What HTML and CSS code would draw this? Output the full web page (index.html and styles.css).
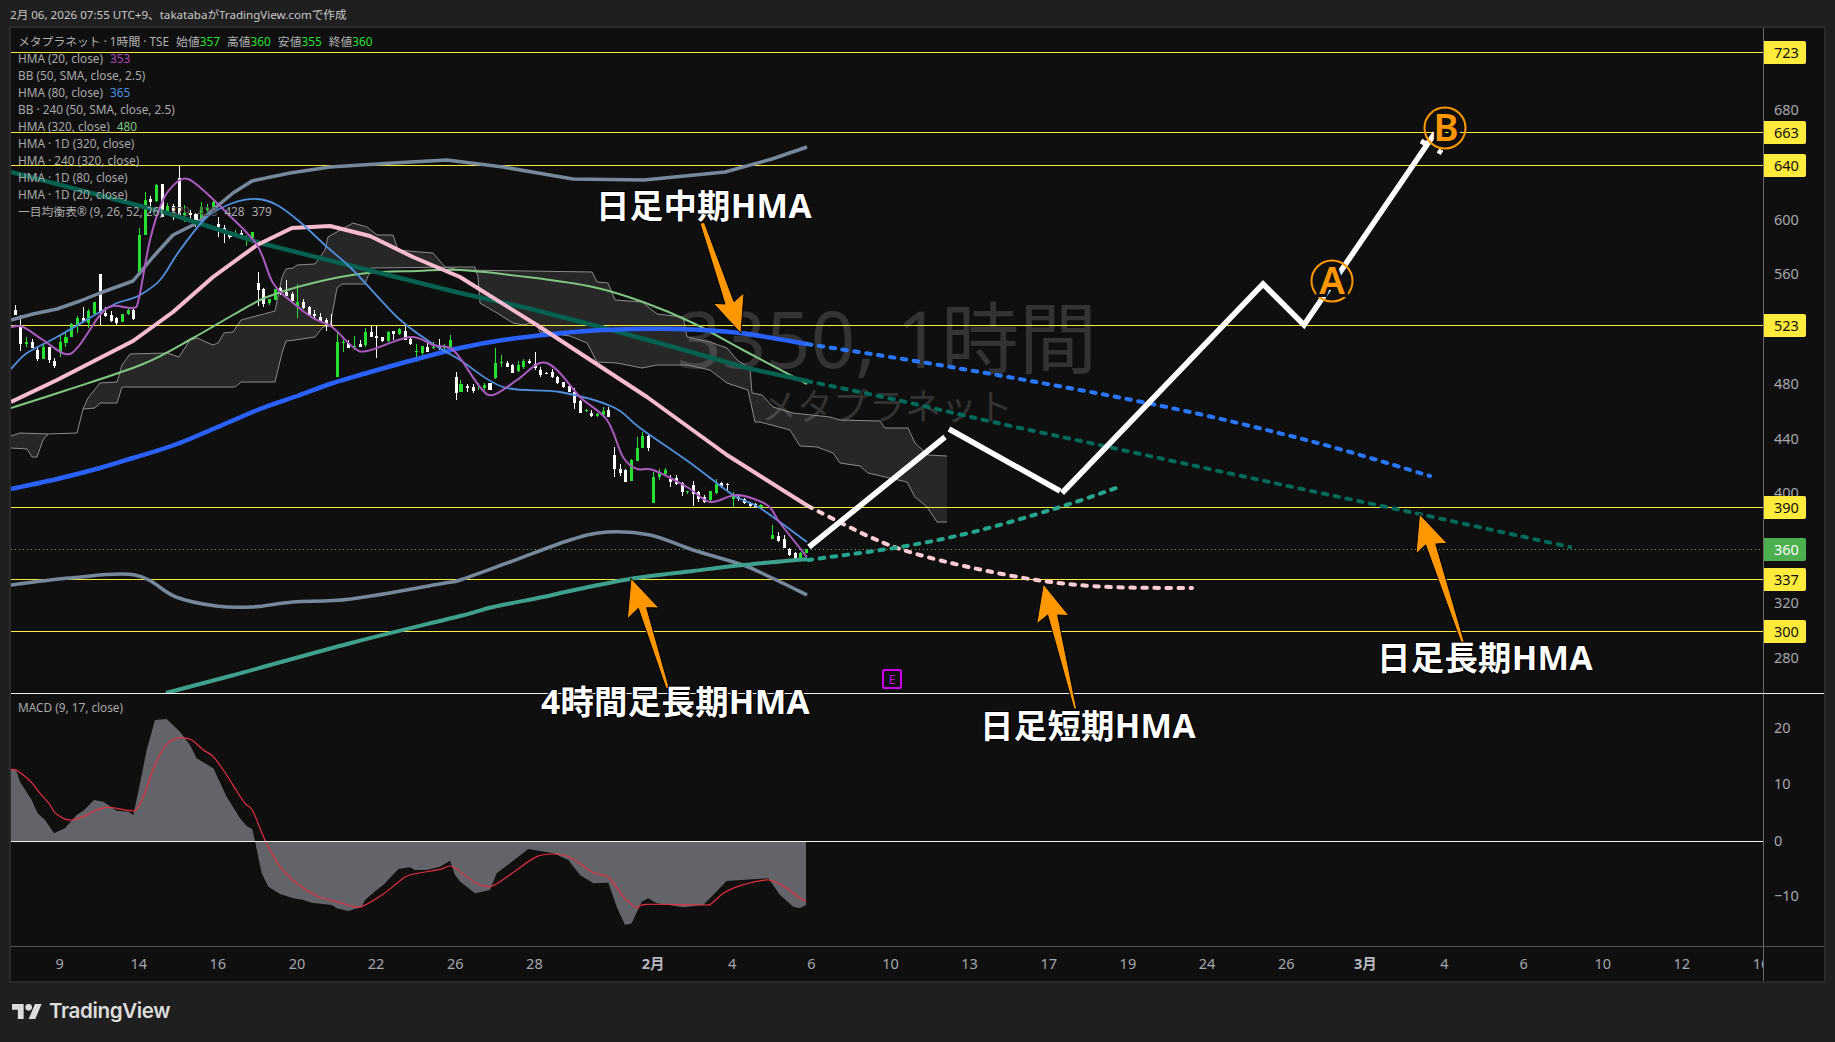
FILE: index.html
```html
<!DOCTYPE html>
<html lang="ja">
<head>
<meta charset="utf-8">
<title>メタプラネット 1時間</title>
<link rel="stylesheet" href="styles.css">
</head>
<body>
<header class="topbar">2月 06, 2026 07:55 UTC+9、takatabaがTradingView.comで作成</header>

<main class="frame">
  <section class="pane pane-main">
    <div class="watermark">
      <div class="wm-big">3350, 1時間</div>
      <div class="wm-small">メタプラネット</div>
    </div>
    <svg class="canvas" viewBox="11 28 1752 665" width="1752" height="665" aria-hidden="true">
      <!-- cloud -->
      <path class="cloud" d="M11 436L20 433L48 434L43 440L37 457L32 457L27 449L11 448Z"/>
      <path class="cloud" d="M77 433L83 409L88 398L100 383L117 382L122 365L130 354L167 353L179 357L190 340L197 338L213 345L218 343L224 333L233 332L241 320L275 311L282 277L286 269L293 268L297 265L315 264L325 250L328 237L353 223L367 227L377 235L393 235L398 250L420 252L433 253L445 267L460 270L592 272L597 282L608 283L615 300L642 302L657 314L683 317L687 337L710 342L727 348L737 360L750 368L752 393L762 395L773 407L793 413L830 417L840 420L880 421L885 428L908 428L915 443L928 455L947 456L947 522L937 522L927 507L915 497L907 482L868 473L860 466L840 463L833 453L817 447L800 446L790 430L760 422L755 422L748 390L727 383L710 370L687 365L657 365L642 368L617 363L597 362L587 343L570 336L547 333L540 332L535 322L523 325L513 323L497 313L480 303L478 277L475 267L460 267L371 268L365 284L342 284L337 288L330 326L323 327L315 337L295 340L286 341L282 353L275 382L241 382L235 387L122 387L117 403L100 403L95 408L83 409Z"/>
      <path class="cloud-line" d="M11 436L20 433L48 434L77 433L83 409L88 398L100 383L117 382L122 365L130 354L167 353L179 357L190 340L197 338L213 345L218 343L224 333L233 332L241 320L275 311L282 277L286 269L293 268L297 265L315 264L325 250L328 237L353 223L367 227L377 235L393 235L398 250L420 252L433 253L445 267L460 270L592 272L597 282L608 283L615 300L642 302L657 314L683 317L687 337L710 342L727 348L737 360L750 368L752 393L762 395L773 407L793 413L830 417L840 420L880 421L885 428L908 428L915 443L928 455L947 456"/>
      <path class="cloud-line" d="M11 448L27 449L32 457L37 457L43 440L48 434M83 409L95 408L100 403L117 403L122 387L235 387L241 382L275 382L282 353L286 341L295 340L315 337L323 327L330 326L337 288L342 284L365 284L371 268L460 267L475 267L478 277L480 303L497 313L513 323L523 325L535 322L540 332L547 333L570 336L587 343L597 362L617 363L642 368L657 365L687 365L710 370L727 383L748 390L755 422L760 422L790 430L800 446L817 447L833 453L840 463L860 466L868 473L907 482L915 497L927 507L937 522L947 522"/>

      <!-- price lines -->
      <path class="hline" d="M11 52.500H1763M11 132.500H1763M11 165.500H1763M11 325.500H1763M11 507.500H1763M11 579.500H1763M11 631.500H1763"/>
      <path class="last-line" d="M11 549.500H1763"/>

      <!-- candles -->
      <g transform="translate(0 0) scale(.33333)">
        <path class="wick-g" d="M418 685V825M436 575V705M469 552V605M503 608V640M554 615V665M604 607V678M622 612V640M640 600V628M706 690V712M740 705V738M757 695V730"/>
        <path class="body-g" d="M418 705V825M436 600V705M469 555V603M503 618V635M554 640V645M604 622V675M622 625V630M640 605V625M706 698V710M740 710V712M757 697V715"/>
        <path class="wick-w" d="M451 587V640M487 552V650M520 612V660M538 497V650M571 630V660M588 640V680M656 650V710M673 675V728M690 695V718M724 690V715"/>
        <path class="body-w" d="M451 597V607M487 553V650M520 618V645M538 534V650M571 640V645M588 643V675M656 672V680M673 685V698M690 697V710M724 698V712"/>
      </g>
      <g transform="translate(0 240) scale(.33333)">
        <path class="wick-g" d="M32 212V250M79 292V320M130 312V358M181 288V350M198 278V320M214 250V292M232 228V278M265 208V265M283 185V222M367 222V246M385 205V225M808 178V195M826 148V180M892 132V235M1013 280V410M1030 296V335M1063 288V330M1097 265V320M1165 272V307M1198 265V285M1249 312V365M1267 318V354M1300 306V326M1334 312V335M1351 285V325"/>
        <path class="body-g" d="M79 305V313M130 322V356M181 306V340M198 291V310M214 253V290M232 235V258M265 213V250M283 187V222M367 222V246M385 209V222M808 178V190M826 148V180M892 186V198M1013 306V410M1030 305V308M1063 318V322M1097 276V316M1165 276V303M1198 268V282M1249 334V336M1267 318V340M1300 320V323M1334 320V323M1351 300V322"/>
        <path class="wick-w" d="M46 195V225M62 225V332M97 298V325M113 325V362M148 320V368M164 355V385M250 200V250M301 102V255M317 200V232M334 214V245M350 230V255M400 207V240M775 97V197M790 143V200M842 140V165M859 120V168M877 155V190M910 178V208M928 197V228M943 210V240M961 220V245M979 235V272M995 222V262M1046 300V325M1081 300V322M1114 258V292M1130 258V354M1147 290V306M1180 272V300M1216 258V300M1232 292V316M1283 310V336M1318 297V330M1369 397V480"/>
        <path class="body-w" d="M46 210V225M62 262V312M97 305V323M113 330V358M148 322V360M164 362V378M250 235V244M301 102V215M317 219V227M334 225V243M350 234V248M400 210V237M775 128V150M790 147V192M842 145V158M859 157V167M877 163V183M910 186V205M928 200V226M943 223V228M961 232V245M979 240V255M995 257V261M1046 310V324M1081 313V321M1114 276V291M1130 288V294M1147 292V304M1180 274V283M1216 272V300M1232 297V312M1283 320V336M1318 320V325M1369 410V458"/>
      </g>
      <g transform="translate(460 180) scale(.33333)">
        <path class="wick-g" d="M3 600V637M57 610V630M73 610V630M106 505V597M124 525V562M175 543V577M190 538V567M379 688V696M412 700V710M430 680V707M514 838V903M532 770V842M548 755V805M581 875V968M598 866V900M616 864V885M682 932V942M751 932V968M769 898V942M820 935V982M903 972V985M937 1035V1078M1022 1115V1140M1040 1108V1120"/>
        <path class="body-g" d="M3 613V637M57 620V622M73 614V623M106 548V595M124 545V550M175 555V573M190 543V562M379 690V694M412 702V708M430 692V706M514 840V903M532 805V842M548 768V803M581 890V968M598 880V892M616 870V882M682 934V936M751 934V960M769 912V938M820 945V958M903 975V980M937 1066V1076M1022 1120V1140M1040 1108V1118"/>
        <path class="wick-w" d="M22 613V637M40 612V640M90 608V630M142 542V562M158 553V580M208 537V553M226 516V570M241 560V590M260 575V583M277 568V595M292 588V612M310 605V625M328 615V637M344 625V687M362 660V700M395 690V710M446 680V712M463 800V890M481 853V888M497 868V905M565 762V812M631 885V920M649 885V915M667 905V948M700 902V978M716 932V965M733 945V968M785 905V925M802 910V930M836 945V962M853 955V972M871 966V985M886 968V985M955 1055V1085M973 1065V1105M988 1105V1128M1006 1115V1140"/>
        <path class="body-w" d="M22 618V625M40 622V632M90 610V630M142 548V560M158 555V578M208 542V550M226 553V565M241 570V585M260 578V582M277 575V592M292 590V610M310 607V622M328 618V635M344 635V668M362 662V698M395 698V708M446 690V712M463 826V868M481 868V880M497 870V905M565 768V805M631 897V905M649 895V912M667 910V935M700 915V942M716 935V958M733 950V965M785 910V917M802 912V916M836 950V958M853 958V970M871 968V978M886 972V980M955 1068V1082M973 1078V1104M988 1108V1125M1006 1120V1140"/>
      </g>

      <!-- indicator lines -->
      <path class="l-band" d="M11 320L33 314L57 309L80 301L100 293L133 281L153 257L173 235L197 223L233 193L252 181L290 173L330 167L393 163L447 160L503 167L573 179L644 180L725 172L772 159L807 147"/>
      <path class="l-band smooth" d="M11 585L70 578L135 575L176 597L216 606L252 607L293 602L351 599L445 583L460 580L510 562L570 540L607 532L650 535L693 550L743 565L770 577L807 595"/>
      <path class="l-hma320 smooth" d="M11 408L67 390L143 364L193 338L233 315L267 297L317 282L367 273L417 271L460 270L527 277L593 287L643 302L693 323L743 350L807 384"/>
      <path class="l-long" d="M11 172L167 213L260 243L460 293L527 308L593 325L677 348L747 368L807 381"/>
      <path class="l-long-dash smooth" d="M807 381L897 400L993 422L1113 448L1260 480L1419 514L1570 547"/>
      <path class="l-mid smooth" d="M11 489L57 479L100 468L133 458L177 444L227 423L260 409L300 395L333 383L367 373L417 359L460 348L503 340L553 334L603 330L677 329L740 333L807 344"/>
      <path class="l-mid-dash smooth" d="M807 344L957 368L1157 405L1310 441L1430 476"/>
      <path class="l-short" d="M11 402L57 380L133 341L173 312L213 277L257 245L292 228L330 226L370 236L413 257L460 277L540 327L647 397L727 455L808 506"/>
      <path class="l-short-dash smooth" d="M808 506L870 537L913 553L973 568L1043 581L1110 587L1192 588"/>
      <path class="l-4h smooth" d="M166 693L234 675L351 643L460 616L493 607L543 597L570 591L630 579L693 571L743 565L807 559"/>
      <path class="l-4h-dash smooth" d="M808 560L900 547L973 532L1057 508L1122 486"/>
      <path class="l-hma80 smooth" d="M11 369L27 353L57 337L100 312L117 303L127 300L140 295L160 280L180 250L207 217L233 203L257 199L277 205L300 222L327 247L353 270L397 317L430 342L460 360L503 387L560 392L613 407L640 428L693 465L733 495L760 508L807 542"/>
      <path class="l-hma20 smooth" d="M11 327L23 327L43 340L65 354L78 347L100 315L113 306L133 308L139 298L150 240L163 200L177 182L188 179L203 190L227 213L257 245L273 283L293 303L313 318L332 327L353 347L367 351L410 337L433 345L450 348L460 358L480 387L493 395L517 380L540 363L557 370L580 397L607 420L623 457L637 469L653 470L687 487L710 502L737 495L767 505L780 523L807 557"/>
    </svg>
    <div class="legend">
      <div class="legend-title">メタプラネット · 1時間 · TSE<span class="ohlc">始値<b>357</b></span><span class="ohlc">高値<b>360</b></span><span class="ohlc">安値<b>355</b></span><span class="ohlc">終値<b>360</b></span></div>
      <div class="legend-row">HMA (20, close)<span class="val v-purple">353</span></div>
      <div class="legend-row">BB (50, SMA, close, 2.5)</div>
      <div class="legend-row">HMA (80, close)<span class="val v-blue">365</span></div>
      <div class="legend-row">BB · 240 (50, SMA, close, 2.5)</div>
      <div class="legend-row">HMA (320, close)<span class="val v-green">480</span></div>
      <div class="legend-row">HMA · 1D (320, close)</div>
      <div class="legend-row">HMA · 240 (320, close)</div>
      <div class="legend-row">HMA · 1D (80, close)</div>
      <div class="legend-row">HMA · 1D (20, close)</div>
      <div class="legend-row">一目均衡表® (9, 26, 52, 26)<span class="val v-dim">379</span><span class="val v-dim">428</span><span class="val">428</span><span class="val">379</span></div>
    </div>
  </section>

  <div class="axis axis-price">
    <span class="tick" style="top:70.500px">680</span>
    <span class="tick" style="top:180.500px">600</span>
    <span class="tick" style="top:235px">560</span>
    <span class="tick" style="top:344.500px">480</span>
    <span class="tick" style="top:399.500px">440</span>
    <span class="tick" style="top:453.500px">400</span>
    <span class="tick" style="top:563.500px">320</span>
    <span class="tick" style="top:618.500px">280</span>
    <span class="tag" style="top:13px">723</span>
    <span class="tag" style="top:93px">663</span>
    <span class="tag" style="top:126px">640</span>
    <span class="tag" style="top:286px">523</span>
    <span class="tag" style="top:468px">390</span>
    <span class="tag tag-last" style="top:510px">360</span>
    <span class="tag" style="top:540px">337</span>
    <span class="tag" style="top:592px">300</span>
  </div>

  <section class="pane pane-macd">
    <svg class="canvas" viewBox="11 694 1752 252" width="1752" height="252" aria-hidden="true">
      <g transform="translate(0 690) scale(.33333)">
        <path class="macd-fill" d="M32 453V240L48 240L60 275L95 330L113 370L135 390L162 430L195 415L230 375L250 362L282 330L310 335L350 362L385 365L400 375L420 280L440 180L465 90L500 87L540 125L570 165L590 205L640 235L680 320L720 385L740 408L757 418L765 453L785 550L805 590L840 612L880 625L910 630L935 638L995 645L1010 655L1045 663L1085 650L1095 630L1130 600L1150 585L1195 537L1230 532L1245 540L1280 540L1320 530L1350 512L1365 555L1382 577V453Z"/>
        <path class="macd-line smooth" d="M32 238L48 240L70 255L95 278L120 310L145 338L165 368L190 385L215 390L250 380L285 362L320 352L350 355L400 363L415 350L432 315L465 225L498 165L525 147L545 143L575 150L610 180L640 200L680 255L710 303L735 340L757 360L780 415L800 460L840 530L890 580L950 618L1000 632L1060 650L1085 650L1150 612L1200 572L1230 555L1320 538L1350 528L1380 543"/>
      </g>
      <g transform="translate(460 520) scale(.33333)">
        <path class="macd-fill" d="M-1 965V1084L45 1120L90 1110L110 1060L150 1030L205 987L280 1000L325 1020L360 1065L400 1090L445 1088L470 1160L495 1215L515 1210L545 1145L565 1135L590 1150L670 1162L730 1155L800 1083L925 1075L960 1125L1000 1160L1020 1165L1038 1155V965Z"/>
        <path class="macd-line smooth" d="M0 1055L50 1090L90 1100L120 1085L170 1050L230 1010L280 1002L330 1012L400 1058L445 1072L490 1130L530 1163L560 1153L730 1155L755 1150L790 1120L840 1097L925 1080L980 1105L1020 1135L1038 1142"/>
      </g>
      <path class="zero-line" d="M11 841.500H1763"/>
    </svg>
    <div class="legend legend-macd">MACD (9, 17, close)</div>
  </section>

  <div class="axis axis-macd">
    <span class="tick" style="top:22.500px">20</span>
    <span class="tick" style="top:78.500px">10</span>
    <span class="tick" style="top:135.500px">0</span>
    <span class="tick" style="top:191px">−10</span>
  </div>

  <div class="time-axis">
    <span class="t">9</span><span class="t">14</span><span class="t">16</span><span class="t">20</span><span class="t">22</span><span class="t">26</span><span class="t">28</span><span class="t t-month t-gap">2月</span><span class="t">4</span><span class="t">6</span><span class="t">10</span><span class="t">13</span><span class="t">17</span><span class="t">19</span><span class="t">24</span><span class="t">26</span><span class="t t-month">3月</span><span class="t">4</span><span class="t">6</span><span class="t">10</span><span class="t">12</span><span class="t">16</span>
  </div>
  <div class="corner"></div>

  <div class="drawings">
    <svg class="canvas" viewBox="11 28 1752 918" width="1752" height="918" aria-hidden="true">
      <path class="wave" d="M809 547L945 437M949 429L1060 491M1062 493L1263 284L1304 325L1435 133"/>
      <path class="wave wave-cap" d="M1421 141L1427 144.500M1438 150.500L1442 153"/>
      <circle class="ring" cx="1332" cy="281" r="20.500"/>
      <circle class="ring" cx="1445" cy="128" r="20.500"/>
      <text class="ring-label" x="1332" y="294">A</text>
      <text class="ring-label" x="1446" y="141">B</text>
      <g transform="translate(460 180) scale(.33333)"><path class="arrow" d="M720 130L733 127L822 365L852 338L843 460L760 370L795 372Z"/></g>
      <g transform="translate(460 520) scale(.33333)"><path class="arrow" d="M513 175L597 264L560 263L628 505L618 505L535 265L502 297Z"/></g>
      <g transform="translate(760 400) scale(.33333)"><path class="arrow" d="M850 552L927 647L893 645L950 927L942 927L863 645L830 672Z"/></g>
      <g transform="translate(1300 440) scale(.3413 .33333)"><path class="arrow" d="M350 222L432 310L398 312L482 608L472 608L368 315L340 342Z"/></g>
    </svg>
    <div class="note note-mid">日足中期HMA</div>
    <div class="note note-4h">4時間足長期HMA</div>
    <div class="note note-short">日足短期HMA</div>
    <div class="note note-long">日足長期HMA</div>
    <div class="earnings">E</div>
  </div>
</main>

<footer class="footer">
  <svg class="tv-mark" viewBox="0 4 36 18" width="30" height="15" aria-hidden="true">
    <path d="M14 22H7V11H0V4h14v18zM28 22h-8l7.500-18h8L28 22z"/>
    <circle cx="20" cy="8" r="4"/>
  </svg>
  <span class="tv-word">TradingView</span>
</footer>
<script src="smooth.js"></script>
</body>
</html>
```
FILE: styles.css
```css
* { box-sizing: border-box; }
html, body { margin: 0; padding: 0; }
body {
  width: 1835px;
  height: 1042px;
  overflow: hidden;
  background: #1f1f1f;
  display: flex;
  flex-direction: column;
  font-family: "Noto Sans", "Noto Sans CJK JP", sans-serif;
}

.topbar {
  height: 26px;
  padding-left: 10px;
  padding-top: 2px;
  display: flex;
  align-items: center;
  font-size: 11.600px;
  color: #c9c9c9;
  white-space: nowrap;
}

.frame {
  position: relative;
  margin-left: 9px;
  width: 1817px;
  height: 957px;
  border: 2px solid #2a2a2a;
  background: #0f0f0f;
  display: grid;
  grid-template-columns: 1752px 1fr;
  grid-template-rows: 666px 252px 35px;
}

.pane { position: relative; overflow: hidden; }
.pane-main, .axis-price { border-bottom: 1px solid #f2f2f2; }
.canvas { position: absolute; left: 0; top: 0; display: block; overflow: hidden; }

.watermark {
  position: absolute;
  inset: 0;
  display: flex;
  flex-direction: column;
  align-items: center;
  justify-content: center;
  color: #333;
  line-height: 1.15;
  white-space: nowrap;
}
.wm-big { font-size: 78px; }
.wm-small { font-size: 36px; margin-top: 2px; }

.cloud { fill: rgba(255, 255, 255, .1); stroke: none; }
.cloud-line { fill: none; stroke: #8b8b8b; stroke-width: 1; }
.hline { fill: none; stroke: #ffeb3b; stroke-width: 1; shape-rendering: crispEdges; }
.last-line { fill: none; stroke: #4caf50; stroke-width: 1; stroke-dasharray: 1 3; shape-rendering: crispEdges; }

.wick-g, .body-g, .wick-w, .body-w { fill: none; shape-rendering: crispEdges; }
.wick-g { stroke: #27e02f; stroke-width: 3; }
.body-g { stroke: #27e02f; stroke-width: 10; }
.wick-w { stroke: #fff; stroke-width: 3; }
.body-w { stroke: #fff; stroke-width: 10; }

.l-band, .l-hma320, .l-long, .l-long-dash, .l-mid, .l-mid-dash, .l-short, .l-short-dash,
.l-4h, .l-4h-dash, .l-hma80, .l-hma20 {
  fill: none;
  stroke-linejoin: round;
}
.l-long-dash, .l-mid-dash, .l-short-dash, .l-4h-dash {
  stroke-width: 4;
  stroke-dasharray: 4.500 7.500;
  stroke-linecap: round;
}
.l-band { stroke: #76889c; stroke-width: 3.500; }
.l-hma320 { stroke: #81c784; stroke-width: 2; }
.l-long { stroke: #04604f; stroke-width: 4.500; }
.l-long-dash { stroke: #00695c; }
.l-mid { stroke: #2962ff; stroke-width: 4.500; }
.l-mid-dash { stroke: #2979ff; }
.l-short { stroke: #f8bbd0; stroke-width: 4; }
.l-short-dash { stroke: #ffcdd2; }
.l-4h { stroke: #3fa18d; stroke-width: 4; }
.l-4h-dash { stroke: #26a68f; }
.l-hma80 { stroke: #4f8fdd; stroke-width: 1.800; }
.l-hma20 { stroke: #ab5ac0; stroke-width: 2; }

.macd-fill { fill: #626469; stroke: none; }
.macd-line { fill: none; stroke: #e5303f; stroke-width: 3.600; }
.zero-line { fill: none; stroke: #f2f2f2; stroke-width: 1; shape-rendering: crispEdges; }

.legend {
  position: absolute;
  left: 7px;
  top: 5px;
  font-size: 11.800px;
  color: #a9a9a9;
  white-space: nowrap;
  line-height: 17px;
}
.legend-title { color: #b3b3b3; height: 17px; font-size: 11.800px; }
.legend-row { height: 17px; }
.ohlc { margin-left: 7px; }
.ohlc b { font-weight: 400; color: #27e02f; }
.val { margin-left: 7px; }
.v-purple { color: #ab47bc; }
.v-blue { color: #4a90e2; }
.v-green { color: #81c784; }
.v-dim { color: #555; }
.legend-macd { top: 5px; }

.axis {
  position: relative;
  border-left: 1px solid #6a6a6a;
  font-size: 14.500px;
}
.tick, .tag {
  position: absolute;
  left: 0;
  display: flex;
  align-items: center;
  height: 23px;
  width: 42px;
  padding-left: 10px;
  line-height: 1;
}
.tick { margin-top: -2px; height: 25px; color: #a5a7ae; }
.tag { background: #ffeb3b; color: #111; border-radius: 0 2px 2px 0; }
.tag-last { background: #4caf50; color: #fff; }

.time-axis {
  display: flex;
  align-items: center;
  overflow: hidden;
  padding-left: 9px;
  padding-bottom: 3px;
  border-top: 1px solid #565656;
  font-size: 14.500px;
  color: #a5a7ae;
  white-space: nowrap;
}
.t { flex: 0 0 79.150px; text-align: center; }
.t-gap { margin-left: 39.500px; }
.t-month { font-weight: 700; color: #b8bac0; }
.corner { border-top: 1px solid #565656; border-left: 1px solid #6a6a6a; }

.drawings {
  position: absolute;
  left: 0;
  top: 0;
  width: 1752px;
  height: 918px;
  overflow: hidden;
}
.wave { fill: none; stroke: #fff; stroke-width: 5.500; }
.wave-cap { stroke-width: 5; }
.ring { fill: none; stroke: #ff9800; stroke-width: 2; }
.ring-label {
  font-family: "Noto Sans", sans-serif;
  font-size: 38px;
  font-weight: 600;
  fill: #ff9800;
  stroke: #0f0f0f;
  stroke-width: 6;
  paint-order: stroke;
  text-anchor: middle;
}
.arrow { fill: #ff9800; stroke: #000; stroke-width: 3; stroke-linejoin: round; }

.note {
  position: absolute;
  font-size: 33.400px;
  line-height: 34px;
  font-weight: 700;
  letter-spacing: .3px;
  color: #fff;
  white-space: nowrap;
  text-shadow: 1px 1px 0 #000, -1px -1px 0 #000, 1px -1px 0 #000, -1px 1px 0 #000;
}
.note-mid { left: 585px; top: 160px; }
.note-4h { left: 530px; top: 656px; }
.note-short { left: 969px; top: 680px; }
.note-long { left: 1366px; top: 612px; }

.earnings {
  position: absolute;
  left: 871px;
  top: 641px;
  width: 20px;
  height: 20px;
  border: 2px solid #d000ee;
  border-radius: 2px;
  color: #d000ee;
  font-size: 12px;
  display: flex;
  align-items: center;
  justify-content: center;
}

.footer {
  flex: 1;
  display: flex;
  align-items: center;
  padding-left: 12px;
  gap: 7px;
  padding-bottom: 3px;
  color: #dcdcdc;
}
.tv-mark { fill: #dcdcdc; display: block; }
.tv-word { font-family: "Inter", sans-serif; font-size: 20.600px; font-weight: 600; letter-spacing: -.4px; line-height: 1; }
```
FILE: smooth.js
```js
// Turns the sampled polyline of each indicator into a Catmull-Rom curve.
document.querySelectorAll('path.smooth').forEach(function (path) {
  var nums = path.getAttribute('d').match(/-?[\d.]+/g).map(Number);
  var pts = [];
  for (var i = 0; i < nums.length; i += 2) pts.push([nums[i], nums[i + 1]]);
  var d = 'M' + pts[0][0] + ' ' + pts[0][1];
  for (var j = 0; j < pts.length - 1; j++) {
    var p0 = pts[Math.max(j - 1, 0)];
    var p1 = pts[j];
    var p2 = pts[j + 1];
    var p3 = pts[Math.min(j + 2, pts.length - 1)];
    d += 'C' + (p1[0] + (p2[0] - p0[0]) / 6) + ' ' + (p1[1] + (p2[1] - p0[1]) / 6) +
         ' ' + (p2[0] - (p3[0] - p1[0]) / 6) + ' ' + (p2[1] - (p3[1] - p1[1]) / 6) +
         ' ' + p2[0] + ' ' + p2[1];
  }
  path.setAttribute('d', d);
});
```
